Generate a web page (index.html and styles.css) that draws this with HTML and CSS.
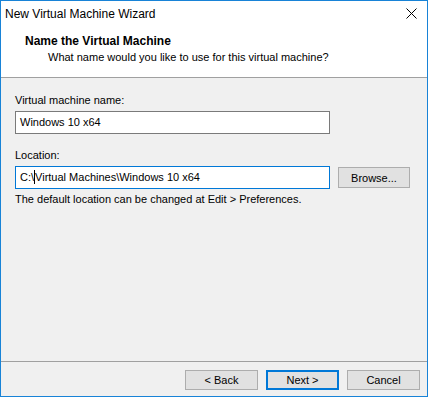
FILE: index.html
```html
<!DOCTYPE html>
<html lang="en">
  <head>
    <meta charset="UTF-8" />
    <title>New Virtual Machine Wizard</title>
    <link rel="stylesheet" href="styles.css">
  </head>
  <body>
    <div class="window">
      <div class="titlebar">
        <span class="title">New Virtual Machine Wizard</span>
        <span class="close">
          <svg width="11" height="11" viewBox="0 0 11 11">
            <path d="M0.5 0.5 L10.5 10.5 M10.5 0.5 L0.5 10.5" stroke="#000" stroke-width="1" fill="none" />
          </svg>
        </span>
      </div>

      <div class="header">
        <div class="heading">Name the Virtual Machine</div>
        <div class="subheading">What name would you like to use for this virtual machine?</div>
      </div>

      <div class="content">
        <div class="label">Virtual machine name:</div>
        <div class="row">
          <div class="field">Windows 10 x64</div>
        </div>

        <div class="label label-gap">Location:</div>
        <div class="row">
          <!-- focused field, caret sits after "C:\" -->
          <div class="field focused">C:\<span class="caret"></span>Virtual Machines\Windows 10 x64</div>
          <button class="btn browse">Browse...</button>
        </div>
        <p class="note">The default location can be changed at Edit &gt; Preferences.</p>
      </div>

      <div class="footer">
        <button class="btn">&lt; Back</button>
        <button class="btn default">Next &gt;</button>
        <button class="btn">Cancel</button>
      </div>
    </div>
  </body>
</html>
```

FILE: styles.css
```css
html,
body {
  margin: 0;
  padding: 0;
}

body {
  font-family: "Liberation Sans", Arial, sans-serif;
  font-size: 11px;
  color: #000;
  background: #f0f0f0;
}

.window {
  box-sizing: border-box;
  width: 428px;
  height: 397px;
  border: 1px solid #1883d7;
  display: flex;
  flex-direction: column;
  background: #f0f0f0;
}

.titlebar {
  box-sizing: border-box;
  height: 29px;
  background: #fff;
  display: flex;
  align-items: center;
  justify-content: space-between;
  padding: 0 10px 0 4px;
}

.title {
  font-size: 12px;
  line-height: 16px;
  margin-top: -4px;
}

.close {
  display: flex;
  margin-top: -5px;
}

.header {
  box-sizing: border-box;
  height: 48px;
  background: #fff;
  border-bottom: 1px solid #a0a0a0;
  padding: 3px 0 0 24px;
}

.heading {
  font-weight: bold;
  font-size: 12px;
  line-height: 16px;
}

.subheading {
  line-height: 16px;
  padding-left: 23px;
}

.content {
  flex: 1;
  padding: 14px 14px 0;
}

.label {
  line-height: 16px;
  margin-bottom: 3px;
}

.label-gap {
  margin-top: 13px;
}

.row {
  display: flex;
  align-items: center;
  gap: 8px;
}

.field {
  box-sizing: border-box;
  width: 315px;
  height: 23px;
  border: 1px solid #7a7a7a;
  background: #fff;
  padding: 0 0 0 4px;
  line-height: 21px;
  white-space: nowrap;
}

.focused {
  border-color: #0078d7;
}

.caret {
  display: inline-block;
  width: 1px;
  height: 14px;
  background: #000;
  vertical-align: -3px;
}

.note {
  margin: 2px 0 0;
  line-height: 16px;
}

.btn {
  box-sizing: border-box;
  width: 73px;
  height: 20px;
  border: 1px solid #adadad;
  background: #e1e1e1;
  font-family: inherit;
  font-size: 11px;
  color: #000;
  padding: 0;
  margin: 0;
}

.browse {
  width: 72px;
  height: 21px;
}

.default {
  border: 2px solid #0078d7;
}

.footer {
  box-sizing: border-box;
  height: 35px;
  border-top: 1px solid #a0a0a0;
  display: flex;
  justify-content: flex-end;
  align-items: flex-start;
  gap: 8px;
  padding: 8px 7px 0 0;
}
```
